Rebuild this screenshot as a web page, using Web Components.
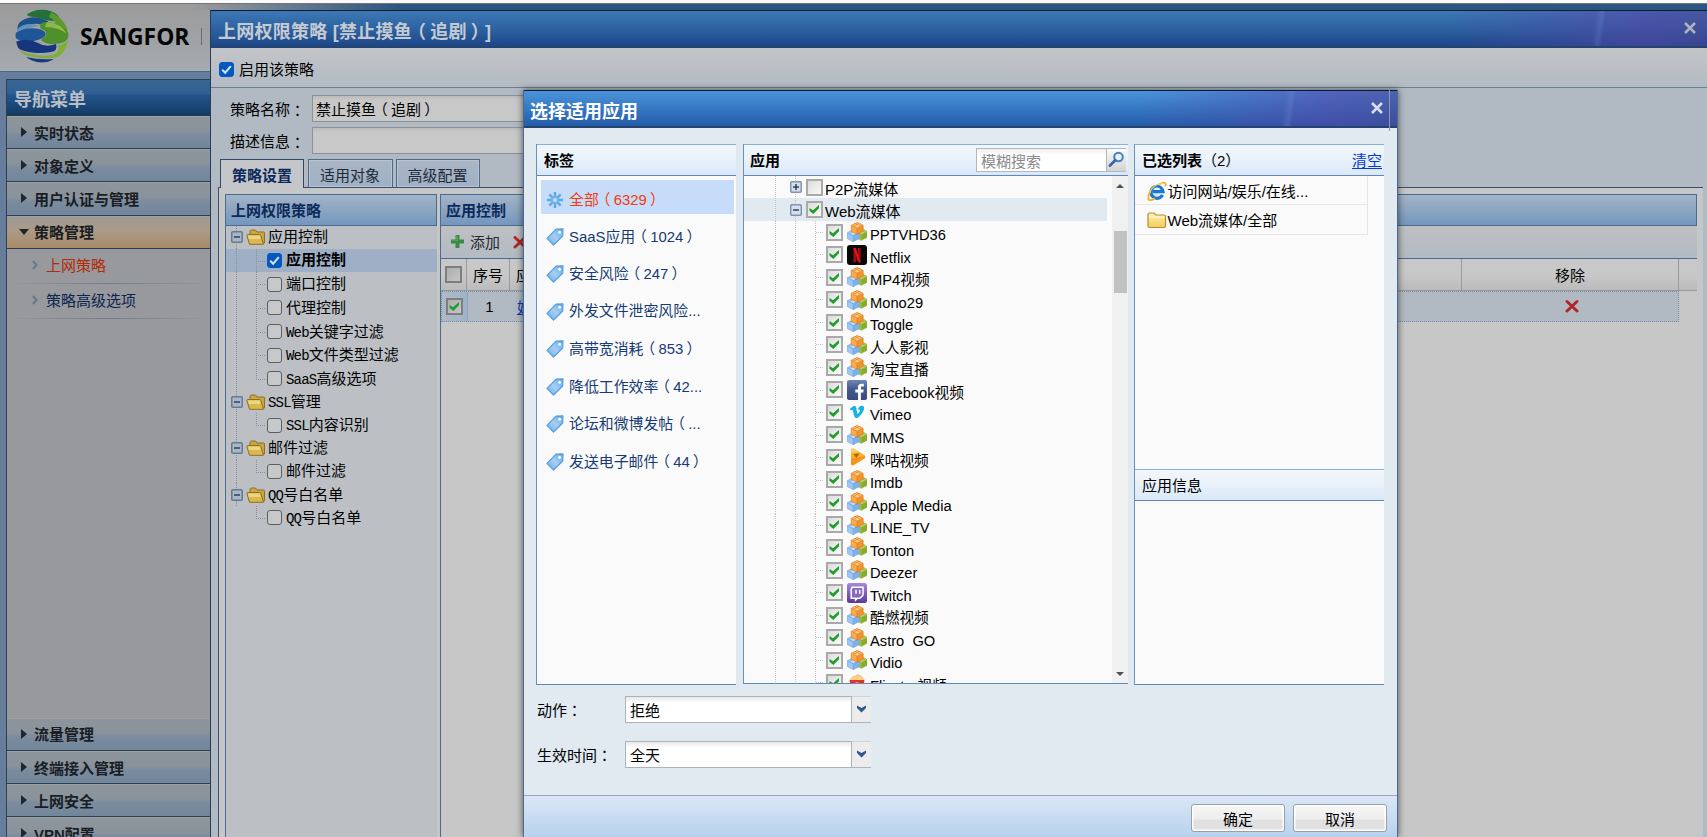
<!DOCTYPE html>
<html lang="zh-CN">
<head>
<meta charset="utf-8">
<title>上网权限策略</title>
<style>
html,body{margin:0;height:100%;overflow:hidden}
body{font:15px "Liberation Sans","Noto Sans CJK SC",sans-serif;color:#000;background:#5f7a99;text-spacing-trim:space-all}
</style>
</head>
<body>
<app-shell></app-shell>
<script>
const punct = s => s.replace(/[：（）]/g, c => `<i class="${c === '（' ? 'l' : c === '）' ? 'r' : ''}">${c}</i>`);
const base = `*{box-sizing:border-box}i{font-style:normal;font-family:"Noto Sans CJK TC",sans-serif}i.l{margin:0 .22em 0 -.22em}i.r{margin:0 -.22em 0 .22em}svg{display:block;flex:none}`;
function define(name, css, html) {
  customElements.define(name, class extends HTMLElement {
    connectedCallback() {
      if (this.shadowRoot) return;
      const root = this.attachShadow({ mode: 'open' });
      root.innerHTML = '<style>' + base + css + '</style>' + (typeof html === 'function' ? html(this) : html);
    }
  });
}

/* ---------- icons ---------- */
const cube = (x, y, top, left, right, edge) => `<g transform="translate(${x} ${y})" stroke="${edge}" stroke-width=".6" stroke-linejoin="round"><path d="M.3 3 6 .6 11.700 3 6 6z" fill="${top}"/><path d="M0 3.200 6 6.200V12L0 9z" fill="${left}"/><path d="M12 3.200 6 6.200V12L12 9z" fill="${right}"/><ellipse cx="3.700" cy="2.300" rx="1.500" ry=".9" fill="${top}"/><ellipse cx="8.300" cy="2.300" rx="1.500" ry=".9" fill="${top}"/><ellipse cx="6" cy="1.300" rx="1.500" ry=".8" fill="${top}"/></g>`;
const icons = {
  cubes: [20, 20, cube(8.3, 6.300, '#c3da72', '#a4c53c', '#86ad29', '#8fb035') + cube(.3, 7.6, '#c6e0fb', '#9dc8f5', '#7fb2ec', '#6a9ddb') + cube(4.200, .2, '#ffcc80', '#fbab4c', '#f2932f', '#dd7a1c')],
  netflix: [20, 20, '<rect width="20" height="20" rx="3" fill="#080808"/><path d="M6.4 3h2.6v14L6.4 17.400z" fill="#a9080e"/><path d="M11 3h2.600v14.400L11 17z" fill="#a9080e"/><path d="M6.400 3H9l4.600 14.400L11 17z" fill="#e3121b"/>'],
  facebook: [20, 20, '<defs><linearGradient id="g" x2="0" y2="1"><stop stop-color="#7086b4"/><stop offset=".45" stop-color="#455b8e"/><stop offset="1" stop-color="#384a79"/></linearGradient></defs><rect width="20" height="20" rx="2" fill="url(#g)"/><path d="M11 20v-7.500H8.300V9.500H11V7.600C11 5 12.300 3.800 14.500 3.800h2.300v2.700h-1.700c-.9 0-1.200.5-1.200 1.300v1.700h2.800l-.4 3h-2.400V20z" fill="#fff"/>'],
  vimeo: [20, 20, '<rect width="20" height="20" rx="3" fill="#fff"/><path d="M2.800 7.100 6.100 4.200c1.600-1.200 2.700-.4 3.100 1.500l1 5.100c.3 1.400.7 1.500 1.500.3 1-1.600 1.500-2.600.9-3.200-.4-.4-1-.3-1.500-.1.500-2.700 1.800-4 3.900-4.100 1.800 0 2.400 1.300 2 3.400-.5 2.500-2.600 5.500-5 7.700-2.300 2.100-4.100 1.700-4.900-1L6 9c-.3-1-.7-1.200-2.200-.4z" fill="#17b3e8"/>'],
  migu: [20, 20, '<path d="M4 3.300C4 1.700 5.300 1 6.700 1.700l10.600 6.400c1.500.9 1.500 2.500 0 3.400L6.700 18C5.300 18.800 4 18 4 16.500z" fill="#fcae24"/><path d="M4 11.500 18 9.200c.6.9.3 1.700-.7 2.300L6.700 18C5.300 18.800 4 18 4 16.500z" fill="#f7941a"/><path d="M4 3.300C4 1.700 5.300 1 6.700 1.700L12 5 4 6z" fill="#ffcb5e"/><path d="M6.500 7 12.500 6.400 9.400 11z" fill="#a8690e"/>'],
  twitch: [20, 20, '<defs><linearGradient id="g" x2="0" y2="1"><stop stop-color="#a78ad9"/><stop offset="1" stop-color="#5b3896"/></linearGradient></defs><rect width="20" height="20" rx="2.500" fill="url(#g)"/><path d="M5 4.300h11v8l-3 3h-2.500L8.600 17v-1.700H4.200V6.500z" fill="#8668bd" stroke="#fff" stroke-width="1.500"/><path d="M9 6.800v4M12.700 6.800v4" stroke="#fff" stroke-width="1.500"/>'],
  popcorn: [20, 20, '<path d="M3 7 6 3.500 8.500 3 10.500 1.500 14 3 17 6.500 16 8.500H4z" fill="#f1d287" stroke="#d7aa4c" stroke-width=".5"/><path d="M2.500 7h15L15.500 19h-11z" fill="#e9311f"/><path d="M8.500 9.500h3V19h-3z" fill="#f6e3dc"/>'],
  tag: [18, 18, '<defs><linearGradient id="g" x1="1" x2="0" y2="1"><stop stop-color="#5ba8ea"/><stop offset=".5" stop-color="#a5cff3"/><stop offset="1" stop-color="#6ea8de"/></linearGradient></defs><path d="M10 1.200 17 .8 16.700 8 7.500 17 1 10.300z" fill="url(#g)" stroke="#559fdf" stroke-width="1.200" stroke-linejoin="round"/><circle cx="13.600" cy="4.300" r="1.500" fill="#fff"/>'],
  burst: [18, 18, '<g stroke="#5aa9e4" stroke-width="2.400"><path d="M9 1v16M1 9h16M3.300 3.300l11.400 11.400M14.700 3.300 3.300 14.700"/></g><circle cx="9" cy="9" r="4.400" fill="#6fb4e9"/><circle cx="9" cy="9" r="2" fill="#c7def8"/>'],
  search: [17, 17, '<circle cx="10.500" cy="6" r="4.300" fill="#e3effb" stroke="#4480c0" stroke-width="2"/><path d="M7.300 9.300 2 14.500" stroke="#3767a6" stroke-width="2.800" stroke-linecap="round"/>'],
  ie: [20, 20, '<path d="M15.500 13.800A6 6 0 1 1 16 10.600H6" fill="#cfe8fa" stroke="#1d78cc" stroke-width="3.200"/><path d="M6.500 8.500C7.500 6 12 5.500 13.500 8.600z" fill="#f2f9ff"/><path d="M18.300 5.500C19.600 1.400 17.300.4 12.500 3.200M3.600 10C.8 15 .5 19 3 19.300c1.500.1 3.500-.9 5-2" fill="none" stroke="#e9b63a" stroke-width="1.900"/><path d="M2.800 11c2-4.800 7-8.300 12.500-8.500" fill="none" stroke="#f2cd62" stroke-width="1.400"/>'],
  folder: [20, 20, '<defs><linearGradient id="g" x2="0" y2="1"><stop stop-color="#fff3ae"/><stop offset="1" stop-color="#f4cb58"/></linearGradient></defs><path d="M1 16V4.500Q1 3 2.500 3H7l2 2h8q1.500 0 1.500 1.500V16q0 1.500-1.500 1.500H2.500Q1 17.500 1 16z" fill="url(#g)" stroke="#b78a35" stroke-width="1.200"/><path d="M2 7h15.500" stroke="#fffbe0"/>'],
  openfolder: [20, 18, '<path d="M4 15V3.500Q4 2 5.500 2h4l1.500 2h6.500q1 0 1 1V15z" fill="#c9a63f" stroke="#8f6f24"/><path d="M3.500 16.300.9 7.500Q.7 6.500 1.700 6.500h12q.8 0 1.100.8l2.700 9z" fill="#dab84e" stroke="#8f6f24"/><path d="M2 7.500h11.600l1 3.500H2.900z" fill="#ead583"/>'],
  plus: [15, 15, '<path d="M5.500 1h4v4.500H14v4H9.500V14h-4V9.500H1v-4h4.500z" fill="#3b8a41"/><path d="M6.500 2h1v5h-5V6.500h4z" fill="#6bb06e"/>'],
  cross: [14, 14, '<path d="M2 2.500 12 12M12 2.500 2 12" stroke="#b32525" stroke-width="3" stroke-linecap="round"/>'],
  close: [14, 14, '<path d="M2 2 12 12M12 2 2 12" stroke="currentColor" stroke-width="2.600"/>'],
  drop: [11, 8, '<path d="M1 .5 5.500 3 10 .5V3L5.500 7.500 1 3z" fill="#2f568e"/>'],
};
define('ui-icon', ':host{display:block;flex:none}', el => {
  const [w, h, d] = icons[el.getAttribute('name')];
  return `<svg width="${w}" height="${h}" viewBox="0 0 ${w} ${h}" fill="none">${d}</svg>`;
});

define('sangfor-logo', ':host{display:block;flex:none}', `
<svg width="54" height="54" viewBox="0 0 54 54"><defs><clipPath id="c"><circle cx="27" cy="27" r="26.500"/></clipPath></defs>
<g clip-path="url(#c)">
<path d="M12 5Q26-4 40 4 48 10 40 12 32 12 20 8 12 8 12 5z" fill="#25703a"/>
<path d="M36 3Q48 9 53 21 46 22 40 18 42 12 34 8z" fill="#5c9a2c"/>
<path d="M3 15Q14 3 33 12 34 16 27 16 16 12 2 22z" fill="#1c5289"/>
<path d="M2 20Q12 12 24 17 12 18 2 24z" fill="#5f93bd"/>
<path d="M-1 25Q10 17 24 20 34 23 29 28 18 35 4 31-1 29-1 25z" fill="#1f5698"/>
<path d="M26 20Q22 13 33 13 49 15 54 25 53 33 46 34 34 37 27 32 25 29 30 28 34 22 26 20z" fill="#4f8f2c"/>
<path d="M32 13Q46 14 52 25 44 18 30 18z" fill="#8cba4a"/>
<path d="M0 33Q12 28 23 34 31 39 41 35 43 42 36 43 18 46 4 40 0 37 0 33z" fill="#15357c"/>
<path d="M43 36Q50 36 54 30 52 42 44 48 30 51 14 47 6 45 4 41 22 49 38 46 46 43 43 36z" fill="#7fae34"/>
<path d="M11 48Q24 51 39 50 30 56 18 54z" fill="#173a80"/>
</g></svg>`);

/* native style checkbox (dimmed) and grid style checkbox */
define('check-box', `:host{display:block;flex:none}
.n{width:15px;height:15px;border:1.500px solid #5c5e61;border-radius:3px;background:#c6c8ca}
.n.on{background:#0459be;border-color:#0459be}
.g{width:17px;height:17px;border:2px solid #a9a9a9;background:linear-gradient(135deg,#dcdcdc,#fafafa)}
.d{border-color:#7c7e80;background:linear-gradient(135deg,#adadad,#c6c6c6)}
svg{margin:-1px}.g svg{margin:-1px}`, el => {
  const on = el.hasAttribute('on');
  if (el.getAttribute('kind') === 'native')
    return `<div class="n ${on ? 'on' : ''}">${on ? '<svg width="15" height="15"><path d="M3.200 7.700 6.200 10.700 11.800 4.200" fill="none" stroke="#d8e2ee" stroke-width="2"/></svg>' : ''}</div>`;
  return `<div class="g ${el.getAttribute('kind') || ''}">${on ? '<svg width="15" height="15"><path d="M2.500 6 6 8.300 12 3V6.300L6.300 12 2.500 8.800z" fill="#1f9e2a"/></svg>' : ''}</div>`;
});

define('tree-toggle', `:host{display:block;flex:none;width:12px;height:12px}`, el => `<svg width="12" height="12"><rect x=".75" y=".75" width="10.500" height="10.500" rx="1" fill="var(--f,#d5dfec)" stroke="var(--s,#8393b0)" stroke-width="1.500"/><path d="M3 6h6${el.hasAttribute('plus') ? 'M6 3v6' : ''}" stroke="#31415f" stroke-width="1.500"/></svg>`);

/* ---------- navigation ---------- */
define('nav-item', `:host{display:block;flex:none;height:33.2px;border-bottom:1px solid #2b3f56}
.r{display:flex;align-items:center;height:100%;padding:0 0 1px 14px;gap:7px;background:linear-gradient(#8d959c,#8a939b 45%,#7d8c9f 55%,#71869a);border-top:1px solid #9f9f9f;font-weight:bold;color:#1a1e24}
.r.open{background:linear-gradient(#9f9a94,#ab9a86 45%,#a98a68);padding-left:12px;gap:5px}`, el => el.hasAttribute('open')
  ? '<div class="r open"><svg width="10" height="6"><path d="M0 0h10L5 6z" fill="#1f2429"/></svg><slot></slot></div>'
  : '<div class="r"><svg width="6" height="10"><path d="M0 0v10L6 5z" fill="#1c2830"/></svg><slot></slot></div>');
define('nav-sub', `:host{display:flex;align-items:center;gap:8px;height:35px;padding:0 0 3px 25px;color:#0b2450;background:linear-gradient(90deg,transparent,#6d7d8c 50%,transparent) bottom/100% 1px no-repeat}
:host([active]){color:#b52a08}`, '<svg width="6" height="10"><path d="M1 1l3.500 4L1 9" fill="none" stroke="#65798f" stroke-width="2"/></svg><slot></slot>');
define('nav-menu', `:host{display:flex;flex-direction:column;height:100%;border:1px solid #2c4056;border-bottom:0;background:#97999c}
h2{flex:none;margin:0;height:36px;padding:1px 0 0 7px;display:flex;align-items:center;font-size:18px;color:#b9bec4;background:linear-gradient(#3a6593,#2f6094 40%,#22558c 42%,#143c66);border-bottom:1px solid #243850}
.sub{flex:none;height:469px}`, `
<h2>导航菜单</h2>
<nav-item>实时状态</nav-item><nav-item>对象定义</nav-item><nav-item>用户认证与管理</nav-item><nav-item open>策略管理</nav-item>
<div class="sub"><nav-sub active>上网策略</nav-sub><nav-sub>策略高级选项</nav-sub></div>
<nav-item>流量管理</nav-item><nav-item>终端接入管理</nav-item><nav-item>上网安全</nav-item><nav-item>VPN配置</nav-item>`);

/* ---------- policy window ---------- */
define('win-title', `:host{display:flex;align-items:center;justify-content:space-between;flex:none;height:38px;padding:2px 10px 0 7px;font-size:18px;font-weight:bold;border-top:1px solid #0a1c33;border-bottom:2px solid #24446f;background:linear-gradient(98deg,transparent 46%,rgba(160,190,240,.14) 49%,transparent 51%) right/210px 100% no-repeat,linear-gradient(90deg,transparent,rgba(84,68,165,.6) 75%,rgba(76,66,150,.6)) right/260px 100% no-repeat,linear-gradient(var(--a),var(--b) 55%,var(--c))}`, '<slot></slot>');
define('tab-item', `:host{display:flex;align-items:center;justify-content:center;height:28px;padding:1px 1px 0 0;border:1px solid #4e6a89;border-bottom:0;background:linear-gradient(#aab6c5,#9fb0c5);color:#1f2a38;box-shadow:inset 0 0 0 1px #b9c4d0}
:host([active]){font-weight:bold;color:#0b2a5b;background:#c5c6c9;height:29px;padding-right:0;margin-bottom:-1px;box-shadow:none;border-color:#2f4a68;z-index:1}`, '<slot></slot>');
define('tree-folder', `:host{display:flex;align-items:center;height:22.600px;padding-left:5px;--f:#a9b6c6;--s:#687a8f;background:repeating-linear-gradient(#8b8f94 0 1px,transparent 1px 2px) 10px 0/1px 100% no-repeat}
ui-icon{margin:0 2px 0 3px}span{padding-bottom:3px}`, '<tree-toggle></tree-toggle><ui-icon name="openfolder"></ui-icon><span><slot></slot></span>');
define('tree-leaf', `:host{display:flex;align-items:center;height:23.700px;padding-left:41px;--g:repeating-linear-gradient(#8b8f94 0 1px,transparent 1px 2px);background:repeating-linear-gradient(90deg,#8b8f94 0 1px,transparent 1px 2px) 30px 12px/10px 1px no-repeat,var(--g) 30px 0/1px 100% no-repeat,var(--g) 10px 0/1px 100% no-repeat}
:host([end]){background:repeating-linear-gradient(90deg,#8b8f94 0 1px,transparent 1px 2px) 30px 12px/10px 1px no-repeat,var(--g) 30px 0/1px 12px no-repeat,var(--g) 10px 0/1px 100% no-repeat}
:host([last]){background:repeating-linear-gradient(90deg,#8b8f94 0 1px,transparent 1px 2px) 30px 12px/10px 1px no-repeat,var(--g) 30px 0/1px 12px no-repeat}
:host([on]){background-color:#9fb0c6;font-weight:bold}
span{padding:0 0 3px 4px}`, el => `<check-box kind="native" ${el.hasAttribute('on') ? 'on' : ''}></check-box><span><slot></slot></span>`);
define('policy-tree', `:host{display:block;flex:none;width:212px;border:1px solid #4b6b90;border-bottom:0;border-right:0;background:#bcc0c5}
h3{margin:0;height:31px;padding:0 0 1px 5px;display:flex;align-items:center;font-size:15px;color:#0b2a5b;background:linear-gradient(#a3b4c8,#8ca5c0 50%,#7397bf);border-bottom:1px solid #4b6b90;border-right:1px solid #4b6b90}
tt{font:14px "Liberation Mono",monospace;letter-spacing:-.8px}`, `
<h3>上网权限策略</h3>
<tree-folder>应用控制</tree-folder>
<tree-leaf on>应用控制</tree-leaf><tree-leaf>端口控制</tree-leaf><tree-leaf>代理控制</tree-leaf><tree-leaf><tt>Web</tt>关键字过滤</tree-leaf><tree-leaf><tt>Web</tt>文件类型过滤</tree-leaf><tree-leaf end><tt>SaaS</tt>高级选项</tree-leaf>
<tree-folder><tt>SSL</tt>管理</tree-folder><tree-leaf end><tt>SSL</tt>内容识别</tree-leaf>
<tree-folder>邮件过滤</tree-folder><tree-leaf end>邮件过滤</tree-leaf>
<tree-folder><tt>QQ</tt>号白名单</tree-folder><tree-leaf last><tt>QQ</tt>号白名单</tree-leaf>`);
define('rule-grid', `:host{display:block;flex:1;min-width:0;border-left:1px solid #4b6b90;border-top:1px solid #4b6b90;background:#c7c7c7;margin-right:6px}
h3{margin:0;height:31px;padding:0 0 1px 5px;display:flex;align-items:center;font-size:15px;color:#0b2a5b;background:linear-gradient(#a3b4c8,#8ca5c0 50%,#7397bf);border-bottom:1px solid #4b6b90;border-right:1px solid #4b6b90}
.bar{display:flex;align-items:center;height:33px;padding:0 0 1px 9px;background:linear-gradient(#bfc0c2,#b2bac3);border-bottom:1px solid #4b6b90;gap:5px;color:#26292d}
.bar span{margin-right:8px}
.row{display:grid;grid-template-columns:26px 43px 952px 217px 1fr;height:32px;background:linear-gradient(#c8c8c8 50%,#bbb);border-bottom:1px solid #999}
.row>*{display:flex;align-items:center;justify-content:center;border-right:1px solid #999}
.row>:nth-child(3){justify-content:flex-start;padding-left:6px}.row>:last-child{border:0}
.row.d{height:31px;background:#b1bac3;border:1px dotted #7590ad;margin-right:18px}
.row.d>*{border:0;padding-bottom:1px}.row.d>:first-child{background:linear-gradient(90deg,#b1bac3,#9fb3c9);border-right:1px solid #8ba5c0}
a{color:#0a37b5;text-decoration:underline}`, `
<h3>应用控制</h3>
<div class="bar"><ui-icon name="plus"></ui-icon><span>添加</span><ui-icon name="cross"></ui-icon></div>
<div class="row"><div><check-box kind="d"></check-box></div><div>序号</div><div>应用</div><div>移除</div><div></div></div>
<div class="row d"><div><check-box kind="d" on></check-box></div><div>1</div><div><a>娱</a></div><div><ui-icon name="cross"></ui-icon></div></div>`);
define('policy-window', `:host{display:flex;flex-direction:column;border-left:1px solid #263c58;background:#b1bac3}
win-title{--a:#3d78b5;--b:#2b609f;--c:#1d4787;color:#c5cad2}
win-title span{letter-spacing:.25px}
win-title ui-icon{color:#a9b2bf;margin-top:-3px}
.en{display:flex;align-items:center;gap:5px;flex:none;height:40px;padding:3px 0 0 8px;background:linear-gradient(#c3c4c8,#b3bbc3);border-bottom:1px solid #6c8094}
.en span{margin-top:-1px}
.form{display:grid;grid-template-columns:82px 300px;row-gap:5px;padding:7px 0 0 19px;flex:none}
.form>*{height:27px;display:flex;align-items:center;line-height:1;padding-top:2px;white-space:nowrap}
.in{border:1px solid #8a929b;background:linear-gradient(#bbb,#c8c8c8 4px);padding:0 0 0 3px}
.tabs{display:flex;align-items:flex-end;margin:5px 0 0 9px;flex:none;height:28px}
.tabs tab-item:nth-child(1){width:84px}.tabs tab-item:nth-child(2){width:85px;margin:0 3px 0 4px}.tabs tab-item:nth-child(3){width:84px}
.panel{flex:1;display:flex;gap:3px;margin:0 4px 0 7px;border:1px solid #3b4f6b;border-right:0;border-bottom:0;padding:6px 0 0 6px;background:#c5c6c7}`, `
<win-title><span>${punct('上网权限策略 [禁止摸鱼（追剧）]')}</span><ui-icon name="close"></ui-icon></win-title>
<div class="en"><check-box kind="native" on></check-box><span>启用该策略</span></div>
<div class="form"><label>${punct('策略名称：')}</label><div class="in">${'<span>' + punct('禁止摸鱼（追剧）') + '</span>'}</div><label>${punct('描述信息：')}</label><div class="in"></div></div>
<div class="tabs"><tab-item active>策略设置</tab-item><tab-item>适用对象</tab-item><tab-item>高级配置</tab-item></div>
<div class="panel"><policy-tree></policy-tree><rule-grid></rule-grid></div>`);

/* ---------- application dialog ---------- */
define('panel-head', `:host{display:flex;align-items:center;flex:none;height:32px;padding:0 0 1px 6px;font-weight:bold;border-top:1px solid #85b2dc;border-bottom:1px solid #6287b3;background:linear-gradient(#f3f7fb,#e8f1fa 50%,#d9e8f8)}`, '<slot></slot>');
define('tag-item', `:host{display:flex;align-items:center;gap:5px;height:34px;font-size:14.900px;margin:0 2px 3.450px 4px;padding:5px 0 0 5px;color:#163a75;line-height:1;white-space:nowrap}
:host([active]){background:#c6dcf8;color:#f43a0e}`, el => `<ui-icon name="${el.hasAttribute('active') ? 'burst' : 'tag'}"></ui-icon><span><slot></slot></span>`);
const guide = 'repeating-linear-gradient(#c4c4c4 0 1px,transparent 1px 2px)';
define('app-group', `:host{display:flex;align-items:center;height:22.400px;padding-left:46px;background:${guide} 31px 0/1px 100% no-repeat,${guide} 51px 0/1px 100% no-repeat}
:host([on]){background-color:#e1e9f1}
check-box{margin:0 2px 0 4px}span{padding-top:4px;line-height:1}`, el => `<tree-toggle ${el.hasAttribute('on') ? '' : 'plus'}></tree-toggle><check-box ${el.hasAttribute('on') ? 'on' : ''}></check-box><span><slot></slot></span>`);
define('app-row', `:host{display:flex;align-items:center;height:22.540px;font-size:14.700px;padding-left:82px;background:repeating-linear-gradient(90deg,#c4c4c4 0 1px,transparent 1px 2px) 72px 11px/8px 1px no-repeat,${guide} 31px 0/1px 100% no-repeat,${guide} 51px 0/1px 100% no-repeat,${guide} 71px 0/1px 100% no-repeat}
ui-icon{margin:0 3px 0 4px}span{padding-top:7px;line-height:1;white-space:pre}`, el => `<check-box on></check-box><ui-icon name="${el.getAttribute('icon') || 'cubes'}"></ui-icon><span><slot></slot></span>`);
define('scroll-bar', `:host{display:flex;flex-direction:column;align-items:center;width:16px;background:#f0f0f0;padding:8px 0 7px}
.t{width:13px;height:62px;margin-top:43px;background:#c1c1c1}svg:last-child{margin-top:auto}`, '<svg width="8" height="4"><path d="M0 4h8L4 0z" fill="#505050"/></svg><div class="t"></div><svg width="8" height="4"><path d="M0 0h8L4 4z" fill="#505050"/></svg>');
define('search-field', `:host{display:flex;height:24px;width:150px;margin:0 2px 0 auto;border:1px solid #b0b7bf;border-right:0;background:linear-gradient(#eee,#fff 6px);font-weight:normal;color:#8a8a8a}
span{flex:1;padding:1px 0 0 4px;line-height:24px}
div{width:20px;border-left:1px solid #b0b7bf;background:linear-gradient(#fafafa,#d3d3d3);display:flex;align-items:center;justify-content:center}`, '<span>模糊搜索</span><div><ui-icon name="search"></ui-icon></div>');
define('picked-item', `:host{display:flex;align-items:center;height:29.300px;width:233px;padding:1px 0 0 12px;border-bottom:1px solid #e6e6e6;border-right:1px solid #e6e6e6}
ui-icon{margin-right:.5px}`, el => `<ui-icon name="${el.getAttribute('icon')}"></ui-icon><slot></slot>`);
define('select-box', `:host{display:flex;width:246px;height:27px}
span{flex:1;display:flex;align-items:center;padding-left:4px;border:1px solid #abb4bd;background:linear-gradient(#e8e8e8,#fff 6px)}
div{width:19px;display:flex;justify-content:center;padding-top:8px;background:#ececec;border-bottom:1px solid #abb4bd;border-top:1px solid #d0d4d8}`, '<span><slot></slot></span><div><ui-icon name="drop"></ui-icon></div>');
define('push-button', `:host{display:flex;align-items:center;justify-content:center;height:28px;border:1px solid #9a9fa5;border-radius:3px;background:linear-gradient(#f7f7f7,#ededed 55%,#e0e0e0 57%);box-shadow:inset 0 0 0 1.500px #fff}`, '<slot></slot>');
const apps = ['PPTVHD36', 'Netflix|netflix', 'MP4视频', 'Mono29', 'Toggle', '人人影视', '淘宝直播', 'Facebook视频|facebook', 'Vimeo|vimeo', 'MMS', '咪咕视频|migu', 'Imdb', 'Apple Media', 'LINE_TV', 'Tonton', 'Deezer', 'Twitch|twitch', '酷燃视频', 'Astro  GO', 'Vidio', 'Flixster视频|popcorn'];
const tags = ['SaaS应用（1024）', '安全风险（247）', '外发文件泄密风险...', '高带宽消耗（853）', '降低工作效率（42...', '论坛和微博发帖（...', '发送电子邮件（44）'];
define('app-dialog', `:host{display:flex;flex-direction:column;border:1px solid #4d6a8d;border-top:0;border-bottom:0;background:#e1e9f1;box-shadow:0 0 7px rgba(0,0,0,.6)}
win-title{--a:#4a94dc;--b:#3476bf;--c:#245ba9;color:#fff;padding:3px 13px 0 6px}
win-title ui-icon{color:#d9def2;margin-top:-5px}
.edge{position:absolute;right:7px;top:0;width:1px;height:41px;background:#9299ab}
.cols{display:grid;grid-template-columns:200px 385px 250px;column-gap:7px;height:541px;padding:0 0 0 12px;margin-top:16px;flex:none}
.cols>section{display:flex;flex-direction:column;min-height:0;border-left:1px solid #6b8fb8;border-bottom:1px solid #6287b3;background:#fafafa}
.cols>section:nth-child(2){height:540px}.cols>section:nth-child(3){margin:0 1px 0 -1px}
.cols>section:nth-child(1) panel-head,.cols>section:nth-child(3) panel-head{padding-left:7px}
.tags{padding-top:4px}
.apps{display:flex;flex:1;min-height:0;overflow:hidden}.list{flex:1;overflow:hidden}
.list app-group[on]{margin-right:5px}
.picked{height:293px;flex:none}
a{margin-left:auto;margin-right:2px;color:#0737d8;font-weight:normal;text-decoration:underline;text-underline-offset:2px}
.n{font-weight:normal;white-space:pre}
.form{display:grid;grid-template-columns:88px auto;row-gap:18px;justify-content:start;padding:11px 0 0 13px;flex:1;align-content:start}
.form label{display:flex;align-items:center}
footer{height:42px;display:flex;gap:8px;padding:8px 10px 0 0;justify-content:flex-end;border-top:1px solid #93a8c0;background:linear-gradient(#dae7f5,#b7d1ee)}
push-button{width:94px}`, `
<win-title><span>选择适用应用</span><ui-icon name="close"></ui-icon></win-title><div class="edge"></div>
<div class="cols">
<section><panel-head>标签</panel-head><div class="tags"><tag-item active>${punct('全部（6329）')}</tag-item>${tags.map(t => '<tag-item>' + punct(t) + '</tag-item>').join('')}</div></section>
<section><panel-head>应用<search-field></search-field></panel-head><div class="apps"><div class="list"><app-group>P2P流媒体</app-group><app-group on>Web流媒体</app-group>${apps.map(a => { const [n, i] = a.split('|'); return `<app-row icon="${i || 'cubes'}">${n}</app-row>`; }).join('')}</div><scroll-bar></scroll-bar></div></section>
<section><panel-head>已选列表<span class="n">（2）</span><a>清空</a></panel-head><div class="picked"><picked-item icon="ie">访问网站/娱乐/在线...</picked-item><picked-item icon="folder">Web流媒体/全部</picked-item></div><panel-head><span class="n">应用信息</span></panel-head></section>
</div>
<div class="form"><label>${punct('动作：')}</label><select-box>拒绝</select-box><label>${punct('生效时间：')}</label><select-box>全天</select-box></div>
<footer><push-button>确定</push-button><push-button>取消</push-button></footer>`);

define('app-shell', `:host{display:block;position:relative;width:1707px;height:837px;overflow:hidden;background:#667d9b}
.top{height:4px;background:#fafafa;border-bottom:1px solid #777}
header{height:68px;display:flex;align-items:center;padding:0 0 4px 15px;background:linear-gradient(90deg,rgba(150,155,160,0) 190px,#2b5680 400px) 0 0/100% 6px no-repeat,linear-gradient(#9b9b9b,#a0a3a6 60%,#a6abb0);border-bottom:1px solid #4c6a8a}
header b{font:bold 22.900px "Open Sans","Noto Sans",sans-serif;color:#060606;margin:2px 0 0 11px;width:113px}
header s{width:1px;height:17px;background:#666b70;margin:2px 0 0 8px}
nav-menu{width:205px;height:760px;margin:7px 0 0 6px}
policy-window{position:absolute;left:210px;top:10px;width:1497px;height:827px}
app-dialog{position:absolute;left:523px;top:90px;width:875px;height:747px}`, `
<div class="top"></div>
<header><sangfor-logo></sangfor-logo><b>SANGFOR</b><s></s></header>
<nav-menu></nav-menu>
<policy-window></policy-window>
<app-dialog></app-dialog>`);
</script>
</body>
</html>
